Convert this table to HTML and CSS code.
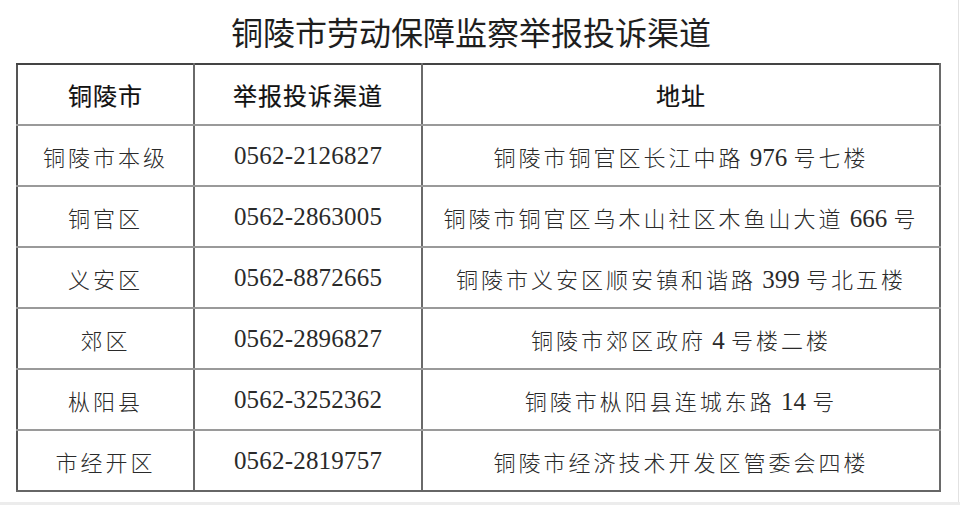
FILE: index.html
```html
<!DOCTYPE html>
<html lang="zh-CN">
<head>
<meta charset="utf-8">
<title>铜陵市劳动保障监察举报投诉渠道</title>
<link rel="stylesheet" href="styles.css">
</head>
<body>
<div class="page">
  <h1 class="title">铜陵市劳动保障监察举报投诉渠道</h1>
  <table class="channels">
    <colgroup>
      <col class="c-city">
      <col class="c-phone">
      <col class="c-addr">
    </colgroup>
    <thead>
      <tr><th>铜陵市</th><th>举报投诉渠道</th><th>地址</th></tr>
    </thead>
    <tbody>
      <tr><td class="name">铜陵市本级</td><td class="phone">0562-2126827</td><td class="addr">铜陵市铜官区长江中路<span class="num"> 976 </span>号七楼</td></tr>
      <tr><td class="name">铜官区</td><td class="phone">0562-2863005</td><td class="addr">铜陵市铜官区乌木山社区木鱼山大道<span class="num"> 666 </span>号</td></tr>
      <tr><td class="name">义安区</td><td class="phone">0562-8872665</td><td class="addr">铜陵市义安区顺安镇和谐路<span class="num"> 399 </span>号北五楼</td></tr>
      <tr><td class="name">郊区</td><td class="phone">0562-2896827</td><td class="addr">铜陵市郊区政府<span class="num"> 4 </span>号楼二楼</td></tr>
      <tr><td class="name">枞阳县</td><td class="phone">0562-3252362</td><td class="addr">铜陵市枞阳县连城东路<span class="num"> 14 </span>号</td></tr>
      <tr><td class="name">市经开区</td><td class="phone">0562-2819757</td><td class="addr">铜陵市经济技术开发区管委会四楼</td></tr>
    </tbody>
  </table>
</div>
<div class="strip"></div>
</body>
</html>
```
FILE: styles.css
```css
html, body {
  margin: 0;
  padding: 0;
  background: #ffffff;
}
body {
  width: 960px;
  height: 505px;
  overflow: hidden;
}
.page {
  width: 958px;
  height: 502px;
  border-right: 1px solid #e2e2e2;
  box-sizing: content-box;
}
.title {
  margin: 0 0 0 16px;
  width: 910px;
  padding-right: 14px;
  height: 63px;
  line-height: 63px;
  text-align: center;
  font-family: "Noto Sans CJK SC", sans-serif;
  font-weight: 400;
  font-size: 32px;
  color: #1e1e1e;
}
.channels {
  margin-left: 16px;
  width: 923px;
  border-collapse: collapse;
  table-layout: fixed;
  color: #2a2a2a;
}
.c-city { width: 177px; }
.c-phone { width: 228px; }
.c-addr { width: 518px; }
.channels th,
.channels td {
  height: 59px;
  padding: 0;
  text-align: center;
  vertical-align: middle;
  border-top: 2px solid #9a9a9a;
  border-bottom: 2px solid #9a9a9a;
  border-left: 2px solid #6a6a6a;
  border-right: 2px solid #6a6a6a;
  white-space: nowrap;
}
.channels thead th {
  border-top: 2px solid #444;
  font-family: "Noto Sans CJK SC", sans-serif;
  font-weight: 400;
  font-size: 24px;
  letter-spacing: 1px;
  color: #111;
  -webkit-text-stroke: 0.2px #111;
}
.channels tbody tr:last-child td {
  border-bottom: 2px solid #666;
}
.channels th:first-child,
.channels td:first-child {
  border-left-color: #555;
}
.name,
.addr {
  font-family: "Noto Sans CJK SC", sans-serif;
  font-weight: 300;
  font-size: 22px;
  letter-spacing: 3px;
}
.phone {
  font-family: "Liberation Serif", serif;
  font-size: 25px;
  letter-spacing: 0.2px;
}
.num {
  font-family: "Liberation Serif", serif;
  font-size: 25px;
  letter-spacing: 0;
}
.strip {
  height: 3px;
  background: #ececec;
}
```
